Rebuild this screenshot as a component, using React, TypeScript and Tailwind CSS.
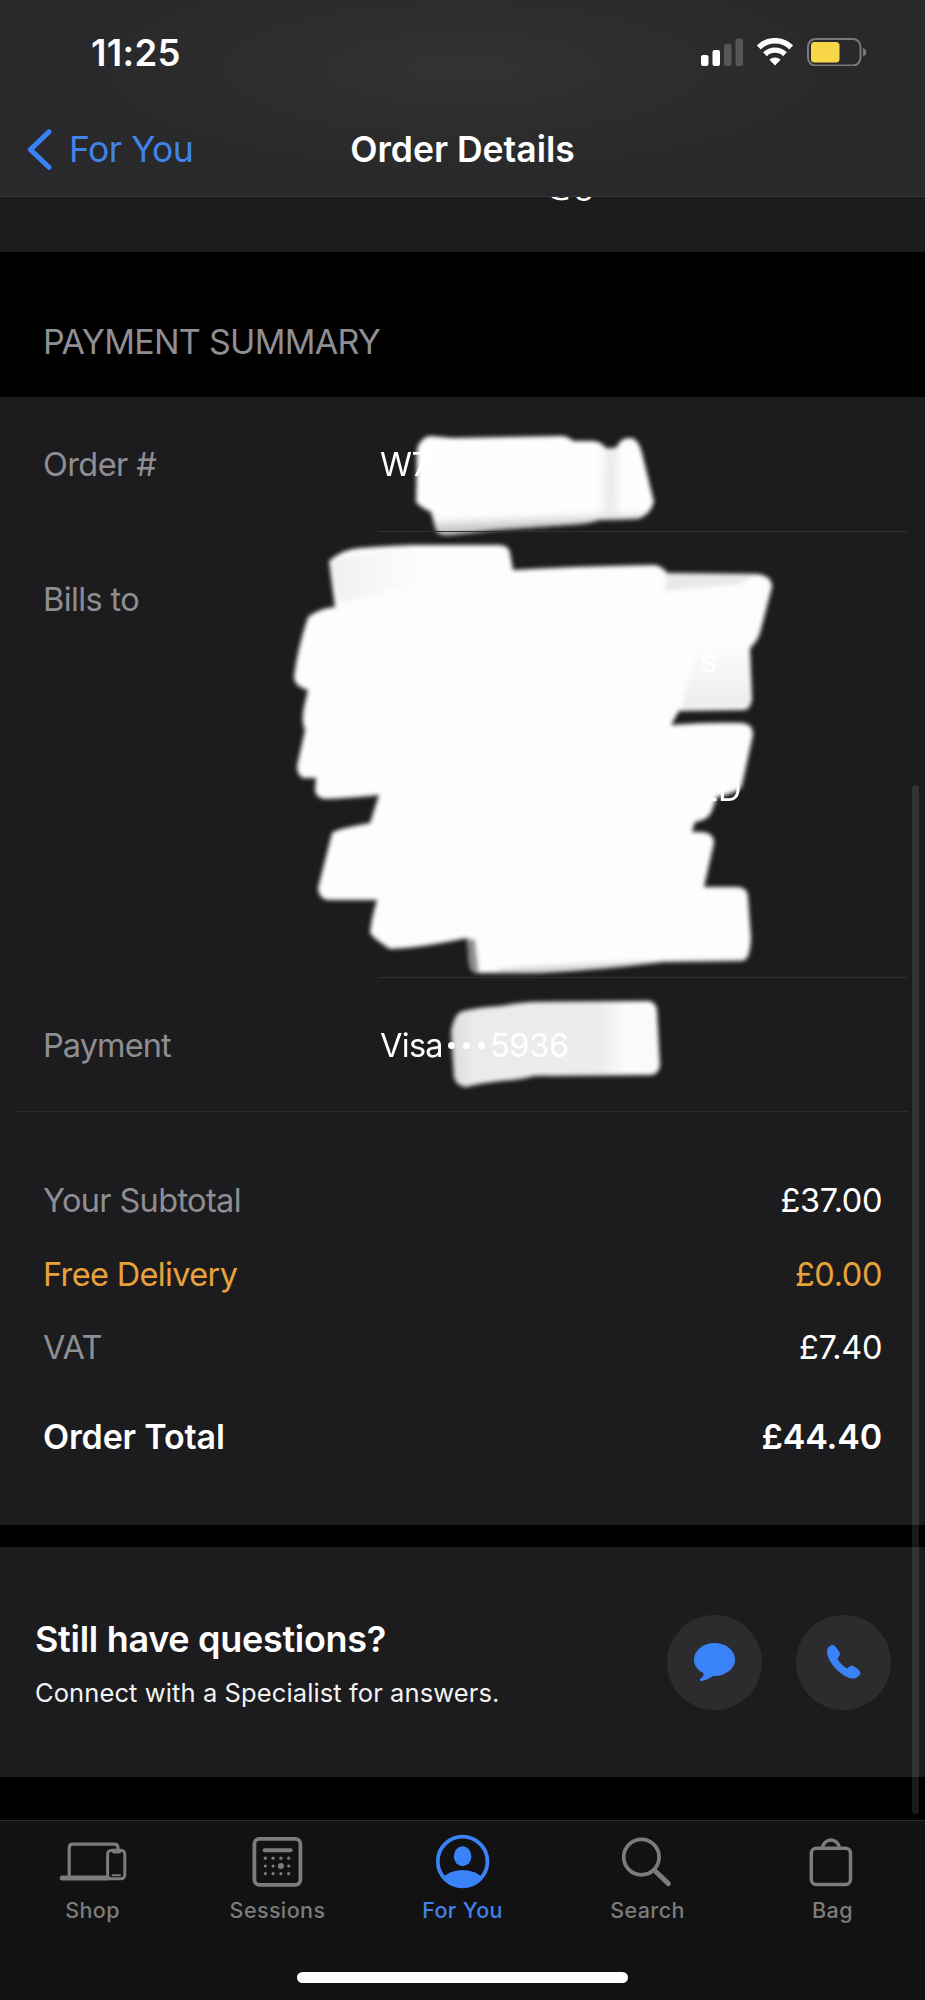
import type { ReactNode } from 'react';

const TOTALS = [
  { label: 'Your Subtotal', value: '£37.00', labelClass: 'text-[#8e8e93]', valueClass: 'text-white' },
  { label: 'Free Delivery', value: '£0.00', labelClass: 'text-[#e9a23b]', valueClass: 'text-[#e9a23b]' },
  { label: 'VAT', value: '£7.40', labelClass: 'text-[#8e8e93]', valueClass: 'text-white' },
];

const SignalIcon = () => (
  <svg width="42" height="28" viewBox="0 0 42 28">
    <rect x="0" y="17" width="7.5" height="11" rx="2" fill="#fff" />
    <rect x="11.5" y="12" width="7.5" height="16" rx="2" fill="#fff" />
    <rect x="23" y="6" width="7.5" height="22" rx="2" fill="#565658" />
    <rect x="34.5" y="0.5" width="7.5" height="27.5" rx="2" fill="#565658" />
  </svg>
);

const WifiIcon = () => (
  <svg width="36" height="28" viewBox="0 0 36 28" fill="none" stroke="#fff">
    <path d="M1.8 9.4 A23 23 0 0 1 34.2 9.4" strokeWidth="5.6" />
    <path d="M8 16.2 A14.4 14.4 0 0 1 28 16.2" strokeWidth="5.4" />
    <path d="M18 27.6 L12.4 21.8 A8 8 0 0 1 23.6 21.8 Z" fill="#fff" stroke="none" />
  </svg>
);

const BatteryIcon = () => (
  <svg width="60" height="28" viewBox="0 0 60 28">
    <rect x="1" y="1" width="52.5" height="26.5" rx="7.5" fill="none" stroke="#79797b" strokeWidth="2" />
    <rect x="4" y="4" width="28.5" height="20.5" rx="3.5" fill="#f7d748" />
    <path d="M56 10 Q59.3 11.2 59.3 14.2 Q59.3 17.2 56 18.4 Z" fill="#79797b" />
  </svg>
);

const ShopIcon = () => (
  <svg width="80" height="60" viewBox="0 0 80 60" fill="none" stroke="#7c7c7c" strokeWidth="3.2">
    <path d="M16.2 45 V17 Q16.2 13.2 20 13.2 H61 Q65 13.2 65 17 V19" />
    <path d="M9.2 47 H56" strokeWidth="5" strokeLinecap="round" />
    <rect x="54.6" y="19.2" width="17.2" height="28.6" rx="4" fill="#121212" strokeWidth="3" />
    <path d="M59 20 H68 V20.5 Q68 22 66 22 H61 Q59 22 59 20.5 Z" fill="#7c7c7c" strokeWidth="1" />
    <path d="M59.5 44.2 H67" strokeWidth="2" strokeLinecap="round" />
  </svg>
);

const SessionsIcon = () => (
  <svg width="80" height="60" viewBox="0.6 0 80 60" fill="#7c7c7c">
    <rect x="17" y="7.8" width="46" height="46" rx="5" fill="none" stroke="#7c7c7c" strokeWidth="3.8" />
    <rect x="25.3" y="17.2" width="30" height="4" rx="2" />
    {[27.9, 35.7, 43.5, 51.3].map((x) =>
      [27.2, 35, 42.7].map((y) => (
        <circle key={`${x}-${y}`} cx={x} cy={y} r={x === 43.5 && y === 35 ? 3 : 1.6} />
      ))
    )}
  </svg>
);

const ForYouIcon = () => (
  <svg width="80" height="60" viewBox="0.4 0 80 60" fill="#3a82f7">
    <clipPath id="avatar">
      <circle cx="40" cy="30.5" r="26" />
    </clipPath>
    <circle cx="40" cy="30.5" r="24.8" fill="none" stroke="#3a82f7" strokeWidth="3.8" />
    <ellipse cx="40" cy="25.2" rx="8.8" ry="10" />
    <path d="M18 49 Q26 39 40 39 Q54 39 62 49 L58 60 H22 Z" clipPath="url(#avatar)" />
  </svg>
);

const SearchIcon = () => (
  <svg width="80" height="60" viewBox="0.6 0 80 60" fill="none" stroke="#7c7c7c">
    <circle cx="34" cy="26.1" r="17.7" strokeWidth="3.7" />
    <path d="M47 39.3 L61 52.6" strokeWidth="5" strokeLinecap="round" />
  </svg>
);

const BagIcon = () => (
  <svg width="80" height="60" viewBox="0.7 0 80 60" fill="none" stroke="#7c7c7c" strokeWidth="3.5">
    <rect x="19" y="17.2" width="39.2" height="36.2" rx="5" />
    <path d="M30 17 A8.7 9.4 0 0 1 47.2 17" />
  </svg>
);

const TABS: { label: string; icon: ReactNode; active?: boolean }[] = [
  { label: 'Shop', icon: <ShopIcon /> },
  { label: 'Sessions', icon: <SessionsIcon /> },
  { label: 'For You', icon: <ForYouIcon />, active: true },
  { label: 'Search', icon: <SearchIcon /> },
  { label: 'Bag', icon: <BagIcon /> },
];

// Marker strokes that hide the personal details
const Redactions = () => (
  <svg className="absolute left-[280px] top-[23px]" width="520" height="680" viewBox="280 420 520 680">
    <defs>
      <filter id="soft" x="-5%" y="-5%" width="110%" height="110%">
        <feGaussianBlur stdDeviation="2" />
      </filter>
      <filter id="softer" x="-20%" y="-50%" width="140%" height="200%">
        <feGaussianBlur stdDeviation="4" />
      </filter>
      <linearGradient id="card" x1="0" x2="1">
        <stop offset="0" stopColor="#dcdcdc" />
        <stop offset="0.12" stopColor="#ebebeb" />
        <stop offset="0.7" stopColor="#ececec" />
        <stop offset="0.84" stopColor="#fbfbfb" />
        <stop offset="1" stopColor="#fafafa" />
      </linearGradient>
      <linearGradient id="fadeLeft" x1="0" x2="1">
        <stop offset="0" stopColor="#f0f0f0" />
        <stop offset="1" stopColor="#fdfdfd" />
      </linearGradient>
      <linearGradient id="fadeDown" x1="0" x2="0" y1="0" y2="1">
        <stop offset="0" stopColor="#fbfbfb" />
        <stop offset="1" stopColor="#ececec" />
      </linearGradient>
      <clipPath id="orderClip">
        <path d="M417 449 Q420 438 430 436 Q440 437 453 438 L563 436 Q569 437 573 441 L594 441 Q601 442 606 448 Q612 449 617 447 Q620 438 630 438 Q638 438 642 453 L654 502 Q650 515 638 519 L600 520 Q590 523 580 524 L495 530 L450 535 Q438 536 436 530 L431 512 Q420 507 416 502 Z" />
      </clipPath>
    </defs>
    <g filter="url(#soft)">
      <g clipPath="url(#orderClip)">
        <rect x="400" y="425" width="270" height="120" fill="#fefefe" />
        <g filter="url(#softer)">
          <path d="M432 524 L560 519 L660 516 V545 H432 Z" fill="#c6c6c6" />
          <path d="M606 440 H616 V520 H604 Z" fill="#e6e6e6" />
        </g>
      </g>
      <path
        fill="#fdfdfd"
        d="M329 561 Q343 549 360 548 Q385 546 413 545 L498 545 Q509 545 510 553 L513 570 Q580 566 655 565 Q662 566 667 573 L756 574 Q772 575 772 587 L760 633 Q757 642 750 648 L752 700 Q750 710 743 710 L679 711 L671 725 Q708 722 743 723 Q753 724 753 735 L742 785 Q741 792 717 797 L711 813 Q706 821 695 822 L692 832 L702 832 Q714 833 714 843 L704 887 L738 887 Q748 888 748 897 L751 938 Q750 961 742 961 L663 962 Q590 971 530 973 L478 973 Q470 973 469 962 L467 938 Q420 948 390 949 Q374 939 370 933 Q371 920 377 900 L327 900 Q318 897 318 888 L332 833 Q336 829 370 823 L379 795 Q350 798 325 799 Q316 798 315 790 L316 778 L304 778 Q297 776 297 766 L305 730 Q301 722 304 707 L308 690 Q294 686 294 677 Q297 650 308 617 Q320 608 335 607 Z"
      />
      <path d="M666 574 L756 575 L740 584 L665 591 Z" fill="#e9e9e9" />
      <path d="M331 561 Q375 549 420 549 V585 L338 603 Z" fill="url(#fadeLeft)" />
      <path d="M696 652 L748 652 L750 706 L681 709 Z" fill="url(#fadeDown)" />
      <path d="M498 969 Q580 962 745 958 L744 960 Q690 959 640 964 L530 972 H498 Z" fill="#d8d8d8" />
      <path d="M467 939 H475 L479 972 Q470 972 469 962 Z" fill="#8d8d8f" />
      <path
        fill="url(#card)"
        d="M451 1032 Q454 1013 463 1011 Q480 1007 501 1006 Q515 1003 531 1002 L649 1001 Q656 1002 657 1010 L660 1066 Q658 1075 650 1075 L534 1076 Q520 1080 501 1081 Q480 1083 466 1087 Q456 1086 454 1077 Z"
      />
    </g>
  </svg>
);

const DetailRow = ({ label, className, children }: { label: string; className: string; children: ReactNode }) => (
  <div className={`flex pl-[43px] pr-[17px] text-[32.5px] leading-[40px] tracking-[-0.6px] ${className}`}>
    <div className="w-[335px] shrink-0 pt-[48px] text-[#8e8e93]">{label}</div>
    <div className="relative z-10 flex-1 border-b border-[#313134] pt-[48px] pl-[2px] text-white">{children}</div>
  </div>
);

export default function App() {
  return (
    <div className="relative flex h-[2000px] w-[925px] flex-col overflow-hidden bg-black font-['Inter',sans-serif] text-white">
      <header className="h-[197px] shrink-0 border-b border-[#3a3a3c] bg-[radial-gradient(ellipse_at_50%_35%,#333332_0%,#2e2e2f_25%,#29292b_60%)]">
        <div className="flex h-[104px] items-center justify-between pr-[58px] pl-[91px]">
          <span className="pt-[2px] text-[36.5px] font-semibold tracking-[0.3px]">11:25</span>
          <div className="flex items-center gap-[14px]">
            <SignalIcon />
            <WifiIcon />
            <BatteryIcon />
          </div>
        </div>
        <div className="grid h-[92px] grid-cols-[1fr_auto_1fr] items-center text-[35.5px]">
          <div className="flex items-center pl-[26px] text-[#4183ea]">
            <svg width="26" height="42" viewBox="0 0 26 42" fill="none" stroke="#3a82f7" strokeWidth="5" strokeLinecap="round" strokeLinejoin="round">
              <path d="M23 2.8 L4.4 20.6 L23 38.3" />
            </svg>
            <span className="ml-[17px] tracking-[-0.5px]">For You</span>
          </div>
          <h1 className="font-semibold">Order Details</h1>
        </div>
      </header>

      <div className="h-[55px] shrink-0 overflow-hidden bg-[#1c1c1e]">
        <div className="-mt-[34px] pl-[545px] text-[32.5px] leading-[40px] tracking-[-2.5px]">@g</div>
      </div>

      <h2 className="h-[145px] shrink-0 pt-[70px] pl-[43px] text-[34px] leading-[40px] tracking-[-0.7px] text-[#8e8e93]">
        PAYMENT SUMMARY
      </h2>

      <section className="relative h-[1128px] shrink-0 bg-[#1c1c1e]">
        <Redactions />
        <DetailRow label="Order #" className="h-[135px]">W7</DetailRow>
        <DetailRow label="Bills to" className="h-[446px]">
          <div className="text-[#fdfdfd]">S</div>
          <div className="mt-[21px] pl-[320px]">s</div>
          <div className="mt-[89px] pl-[319px]">ED</div>
        </DetailRow>
        <div className="mr-[17px] ml-[18px] flex h-[134px] border-b border-[#2c2c2f] pl-[25px] text-[32.5px] leading-[40px]">
          <div className="w-[337px] shrink-0 pt-[48px] tracking-[-0.9px] text-[#8e8e93]">Payment</div>
          <div className="relative z-10 flex items-center pt-[2px] tracking-[-0.7px]">
            <span>Visa</span>
            <span className="mr-[5px] ml-[5px] flex gap-[8px]">
              <i className="size-[7px] rounded-full bg-white" />
              <i className="size-[7px] rounded-full bg-white" />
              <i className="size-[7px] rounded-full bg-white" />
            </span>
            <span className="tracking-[-0.3px]">5936</span>
          </div>
        </div>
        <div className="pt-[53px] pr-[43px] pl-[43px]">
          {TOTALS.map((row) => (
            <div key={row.label} className="flex h-[73.5px] items-center justify-between text-[32.5px]">
              <span className={`tracking-[-0.65px] ${row.labelClass}`}>{row.label}</span>
              <span className={`tracking-[-0.4px] ${row.valueClass}`}>{row.value}</span>
            </div>
          ))}
          <div className="flex h-[101px] items-center justify-between text-[34px] font-semibold tracking-[-0.15px]">
            <span>Order Total</span>
            <span>£44.40</span>
          </div>
        </div>
      </section>

      <section className="mt-[22px] flex h-[230px] shrink-0 items-center justify-between bg-[#1c1c1e] pr-[34px] pl-[35px]">
        <div className="pt-[7px]">
          <h3 className="text-[36px] leading-[54px] font-semibold tracking-[-0.3px]">Still have questions?</h3>
          <p className="text-[25.5px] leading-[54px] tracking-[0.1px] text-[#f2f2f2]">Connect with a Specialist for answers.</p>
        </div>
        <div className="flex gap-[34px]">
          <button className="flex size-[95px] items-center justify-center rounded-full bg-[#2c2c2e]">
            <svg width="44" height="40" viewBox="0 0 44 40" fill="#3a82f7">
              <ellipse cx="21.5" cy="17.5" rx="20.6" ry="16.4" />
              <path d="M11 29 Q11.5 34 7 37 Q6 39 9 39 Q15 38 21 33.5 Z" />
            </svg>
          </button>
          <button className="flex size-[95px] items-center justify-center rounded-full bg-[#2c2c2e]">
            <svg width="36" height="36" viewBox="0 0 36 36" fill="#3a82f7">
              <path d="M1 8 Q1 3.6 4.6 1.6 Q7.8 0 10.2 3.4 L13.2 7.8 Q15 10.6 12.6 12.8 Q11 14.2 12 16 Q15.4 21 19.6 23.8 Q21.4 24.8 22.6 23.2 Q24.8 20.6 27.8 22.2 L32.4 25.4 Q35.8 28.2 33.4 31.2 Q30.8 34.6 26.4 34.6 Q19.6 34.2 10.4 25.4 Q1.4 16 1 8 Z" />
            </svg>
          </button>
        </div>
      </section>

      <nav className="mt-[43px] flex h-[180px] shrink-0 flex-col items-center border-t border-[#2b2b2b] bg-[#121212]">
        <div className="grid w-full grid-cols-5 pt-[10px]">
          {TABS.map((tab) => (
            <div key={tab.label} className="flex flex-col items-center">
              {tab.icon}
              <span className={`mt-[4px] text-[21.5px] leading-[30px] font-medium tracking-[0.4px] ${tab.active ? 'text-[#4183ea]' : 'text-[#7c7c7c]'}`}>
                {tab.label}
              </span>
            </div>
          ))}
        </div>
        <div className="mt-[47px] h-[11px] w-[331px] rounded-full bg-white" />
      </nav>

      {/* scroll indicator */}
      <div className="absolute top-[785px] left-[912px] h-[1029px] w-[7px] rounded-full bg-white/10" />
    </div>
  );
}
